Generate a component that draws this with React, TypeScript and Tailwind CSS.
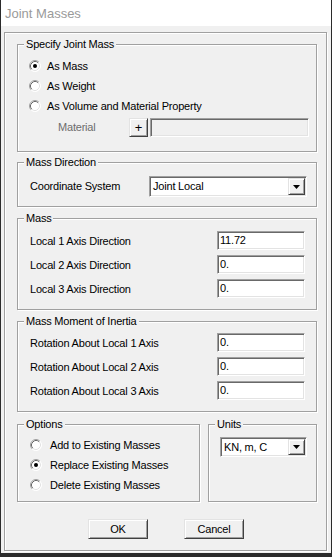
import React from "react";

const Radio = ({ checked }: { checked?: boolean }) => (
  <svg width="12" height="12" viewBox="0 0 12 12" className="shrink-0">
    <circle cx="6" cy="6" r="5.5" fill="#fff" />
    <path d="M2.11 9.89 A5.5 5.5 0 0 1 9.89 2.11" fill="none" stroke="#a0a0a0" />
    <path d="M9.89 2.11 A5.5 5.5 0 0 1 2.11 9.89" fill="none" stroke="#fff" />
    <path d="M2.82 9.18 A4.5 4.5 0 0 1 9.18 2.82" fill="none" stroke="#696969" />
    <path d="M9.18 2.82 A4.5 4.5 0 0 1 2.82 9.18" fill="none" stroke="#e3e3e3" />
    {checked && <circle cx="6" cy="6" r="2" fill="#000" />}
  </svg>
);

const Group = ({ title, className, children }: { title: string; className: string; children?: React.ReactNode }) => (
  <div className={`relative border border-[#a0a0a0] shadow-[inset_1px_1px_0_#fff,1px_1px_0_#fff] ${className}`}>
    <span className="absolute -top-[8px] left-[6px] px-[2px] bg-[#f0f0f0] leading-[14px]">{title}</span>
    {children}
  </div>
);

const TextBox = ({ value, className }: { value: string; className: string }) => (
  <div
    className={`h-[19px] bg-white border border-t-[#a0a0a0] border-l-[#a0a0a0] border-b-white border-r-white shadow-[inset_1px_1px_0_#696969,inset_-1px_-1px_0_#e3e3e3] pl-[2px] flex items-center ${className}`}
  >
    {value}
  </div>
);

// raised classic button
const raised =
  "bg-[#f0f0f0] border border-t-[#e3e3e3] border-l-[#e3e3e3] border-b-[#404040] border-r-[#404040] shadow-[inset_1px_1px_0_#fff,inset_-1px_-1px_0_#a0a0a0]";

const Combo = ({ value, className }: { value: string; className: string }) => (
  <div
    className={`bg-white border border-t-[#a0a0a0] border-l-[#a0a0a0] border-b-white border-r-white shadow-[inset_1px_1px_0_#696969,inset_-1px_-1px_0_#e3e3e3] p-[1px] flex items-stretch ${className}`}
  >
    <div className="flex-1 flex items-center pl-[2px]">{value}</div>
    <div className={`w-[17px] flex items-center justify-center ${raised}`}>
      <svg width="7" height="4" viewBox="0 0 7 4">
        <path d="M0 0 H7 L3.5 4 Z" fill="#000" />
      </svg>
    </div>
  </div>
);

const RadioRow = ({ label, checked, gap }: { label: string; checked?: boolean; gap: string }) => (
  <div className={`h-[20px] flex items-center ${gap}`}>
    <Radio checked={checked} />
    <span>{label}</span>
  </div>
);

export default function App() {
  const massRows = [
    ["Local 1 Axis Direction", "11.72"],
    ["Local 2 Axis Direction", "0."],
    ["Local 3 Axis Direction", "0."],
  ];
  const inertiaRows = [
    ["Rotation About Local 1 Axis", "0."],
    ["Rotation About Local 2 Axis", "0."],
    ["Rotation About Local 3 Axis", "0."],
  ];

  return (
    <div className="w-[332px] h-[557px] flex flex-col bg-[#f0f0f0] border-x border-b-[4px] border-[#2b2b2b] font-['Liberation_Sans',Arial,sans-serif] text-[11px] leading-[13px] text-black tracking-[-0.2px]">
      {/* Title bar */}
      <div className="h-[26px] shrink-0 bg-white flex items-center pl-[4px] text-[13px] text-[#9a9a9a] tracking-normal">
        Joint Masses
      </div>

      <div className="flex-1 pt-[6px] pl-[3px] pr-[4px] pb-[2px]">
        <div className="h-full border border-[#a0a0a0] shadow-[inset_1px_1px_0_#fff,1px_1px_0_#fff] pt-[11px] pl-[12px] pr-[9px] flex flex-col">
          {/* Specify Joint Mass */}
          <Group title="Specify Joint Mass" className="h-[108px] pt-[11px] pl-[11px]">
            <RadioRow label="As Mass" checked gap="gap-[6px]" />
            <RadioRow label="As Weight" gap="gap-[6px]" />
            <RadioRow label="As Volume and Material Property" gap="gap-[6px]" />
            <div className="mt-[2px] h-[19px] flex items-stretch">
              <span className="w-[100px] pl-[29px] flex items-center text-[#6d6d6d]">Material</span>
              <div className={`w-[19px] flex items-center justify-center text-[13px] ${raised}`}>+</div>
              <div className="ml-[2px] w-[159px] bg-[#f0f0f0] border border-t-[#a0a0a0] border-l-[#a0a0a0] border-b-white border-r-white shadow-[inset_1px_1px_0_#696969,inset_-1px_-1px_0_#e3e3e3]" />
            </div>
          </Group>

          {/* Mass Direction */}
          <Group title="Mass Direction" className="mt-[10px] h-[45px] pt-[13px] pl-[12px]">
            <div className="flex items-center">
              <span className="w-[119px]">Coordinate System</span>
              <Combo value="Joint Local" className="w-[158px] h-[21px]" />
            </div>
          </Group>

          {/* Mass */}
          <Group title="Mass" className="mt-[11px] h-[92px] pt-[12px] pl-[12px] flex flex-col gap-[5px]">
            {massRows.map(([l, v]) => (
              <div key={l} className="flex items-center">
                <span className="w-[187px] pt-[1px]">{l}</span>
                <TextBox value={v} className="w-[88px]" />
              </div>
            ))}
          </Group>

          {/* Mass Moment of Inertia */}
          <Group title="Mass Moment of Inertia" className="mt-[11px] h-[91px] pt-[11px] pl-[12px] flex flex-col gap-[5px]">
            {inertiaRows.map(([l, v]) => (
              <div key={l} className="flex items-center">
                <span className="w-[187px] pt-[1px]">{l}</span>
                <TextBox value={v} className="w-[88px]" />
              </div>
            ))}
          </Group>

          {/* Options + Units */}
          <div className="mt-[12px] h-[78px] flex">
            <Group title="Options" className="w-[183px] pt-[10px] pl-[12px]">
              <RadioRow label="Add to Existing Masses" gap="gap-[8px]" />
              <RadioRow label="Replace Existing Masses" checked gap="gap-[8px]" />
              <RadioRow label="Delete Existing Masses" gap="gap-[8px]" />
            </Group>
            <Group title="Units" className="ml-[8px] flex-1 pt-[12px] pl-[11px]">
              <Combo value="KN, m, C" className="w-[87px] h-[20px]" />
            </Group>
          </div>

          {/* Buttons */}
          <div className="mt-[17px] flex">
            <div className={`ml-[71px] w-[60px] h-[20px] flex items-center justify-center ${raised}`}>OK</div>
            <div className={`ml-[36px] w-[60px] h-[20px] flex items-center justify-center ${raised}`}>Cancel</div>
          </div>
        </div>
      </div>
    </div>
  );
}
